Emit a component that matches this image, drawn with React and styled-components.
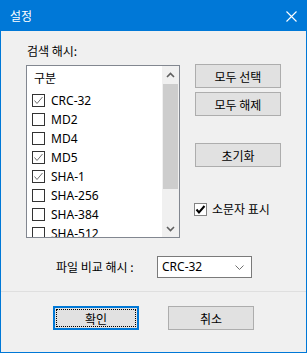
import React from "react";
import styled, { createGlobalStyle } from "styled-components";

const Global = createGlobalStyle`
  html, body { margin: 0; padding: 0; background: #ffffff; }
  * { box-sizing: border-box; }
  body { font-family: "Noto Sans", "Noto Sans CJK KR", sans-serif; font-size: 12px; color: #000; }
`;

const Window = styled.div`
  width: 307px;
  height: 353px;
  border: 1px solid #0078d7;
  background: #f0f0f0;
  display: flex;
  flex-direction: column;
`;

const TitleBar = styled.div`
  height: 30px;
  background: #0078d7;
  color: #fff;
  display: flex;
  align-items: center;
  justify-content: space-between;
  padding: 0 9px 0 9px;
  font-family: "Noto Sans CJK KR", sans-serif;
  font-size: 12px;
`;

const Title = styled.span`
  line-height: 16px;
  margin-top: -1px;
`;

const Body = styled.div`
  flex: 1;
  padding: 12px 0 0 25px;
  display: flex;
  flex-direction: column;
`;

const Label = styled.div`
  height: 16px;
  line-height: 16px;
  margin-left: 1px;
  margin-bottom: 5px;
  font-family: "Noto Sans CJK KR", sans-serif;
`;

const MainRow = styled.div`
  display: flex;
  align-items: flex-start;
`;

const ListBox = styled.div`
  margin-top: 1px;
  width: 154px;
  height: 173px;
  border: 1px solid #828790;
  background: #fff;
  display: flex;
`;

const Items = styled.div`
  flex: 1;
  overflow: hidden;
`;

const Header = styled.div`
  height: 25px;
  padding: 4px 0 0 7px;
  line-height: 16px;
  font-family: "Noto Sans CJK KR", sans-serif;
`;

const Row = styled.div`
  height: 19px;
  display: flex;
  align-items: center;
  padding-left: 5px;
  gap: 6px;
  white-space: nowrap;
  line-height: 16px;
`;

const Box = styled.span`
  width: 13px;
  height: 13px;
  border: 1px solid #333333;
  background: #fff;
  display: flex;
  align-items: center;
  justify-content: center;
  flex-shrink: 0;
`;

const Scrollbar = styled.div`
  width: 17px;
  background: #f0f0f0;
  display: flex;
  flex-direction: column;
`;

const ScrollBtn = styled.div`
  height: 17px;
  display: flex;
  align-items: center;
  justify-content: center;
`;

const Track = styled.div`
  flex: 1;
  padding-top: 1px;
`;

const Thumb = styled.div`
  height: 105px;
  margin: 0 1px;
  background: #cdcdcd;
`;

const Side = styled.div`
  margin-left: 15px;
  display: flex;
  flex-direction: column;
`;

const Button = styled.button`
  width: 86px;
  height: 24px;
  margin: 0;
  margin-top: ${p => p.$gap || 0}px;
  padding: 0;
  background: #e1e1e1;
  border: 1px solid #adadad;
  font-family: "Noto Sans CJK KR", sans-serif;
  font-size: 12px;
  color: #000;
  display: flex;
  align-items: center;
  justify-content: center;
`;

const DefaultButton = styled(Button)`
  border: 2px solid #0078d7;
  padding: 1px;
`;

const Focus = styled.span`
  width: 100%;
  height: 100%;
  border: 1px dotted #000;
  display: flex;
  align-items: center;
  justify-content: center;
`;

const CheckRow = styled.label`
  margin-top: 34px;
  height: 16px;
  line-height: 16px;
  display: flex;
  align-items: center;
  gap: 5px;
  margin-left: -1px;
  font-family: "Noto Sans CJK KR", sans-serif;
`;

const ClassicBox = styled.span`
  width: 13px;
  height: 13px;
  border: 1px solid #838383;
  background: #fff;
  display: flex;
  align-items: center;
  justify-content: center;
`;

const ComboRow = styled.div`
  margin-top: 18px;
  padding-left: 30px;
  display: flex;
  align-items: center;
`;

const ComboLabel = styled.span`
  width: 101px;
  flex-shrink: 0;
  white-space: nowrap;
  line-height: 16px;
  font-family: "Noto Sans CJK KR", sans-serif;
`;

const Combo = styled.div`
  width: 95px;
  height: 22px;
  border: 1px solid #7a7a7a;
  background: #fff;
  display: flex;
  align-items: center;
  justify-content: space-between;
  padding: 0 7px 0 4px;
  line-height: 16px;
`;

const Separator = styled.div`
  height: 1px;
  background: #dfdfdf;
  margin-top: 13px;
`;

const Footer = styled.div`
  height: 60px;
  padding: 14px 0 0 52px;
  display: flex;
  gap: 29px;
`;

const Check = ({ color = "#6d6d6d", w = 1 }) => (
  <svg width="11" height="11" viewBox="0 0 11 11">
    <polyline points="1.5,5.5 4,8.5 9.5,2" fill="none" stroke={color} strokeWidth={w} />
  </svg>
);

const Chevron = ({ up }) => (
  <svg width="9" height="6" viewBox="0 0 9 6">
    <polyline
      points={up ? "1,5 4.5,1.5 8,5" : "1,1 4.5,4.5 8,1"}
      fill="none"
      stroke="#606060"
      strokeWidth="1.6"
    />
  </svg>
);

const items = [
  ["CRC-32", true],
  ["MD2", false],
  ["MD4", false],
  ["MD5", true],
  ["SHA-1", true],
  ["SHA-256", false],
  ["SHA-384", false],
  ["SHA-512", false],
];

export default function App() {
  return (
    <>
      <Global />
      <Window>
        <TitleBar>
          <Title>설정</Title>
          <svg width="11" height="11" viewBox="0 0 11 11">
            <path d="M0.5,0.5 L10.5,10.5 M10.5,0.5 L0.5,10.5" stroke="#fff" strokeWidth="1.1" />
          </svg>
        </TitleBar>
        <Body>
          <Label>검색 해시:</Label>
          <MainRow>
            <ListBox>
              <Items>
                <Header>구분</Header>
                {items.map(([name, on]) => (
                  <Row key={name}>
                    <Box>{on && <Check />}</Box>
                    {name}
                  </Row>
                ))}
              </Items>
              <Scrollbar>
                <ScrollBtn><Chevron up /></ScrollBtn>
                <Track><Thumb /></Track>
                <ScrollBtn><Chevron /></ScrollBtn>
              </Scrollbar>
            </ListBox>
            <Side>
              <Button>모두 선택</Button>
              <Button $gap={4}>모두 해제</Button>
              <Button $gap={27}>초기화</Button>
              <CheckRow>
                <ClassicBox><Check color="#000" w={2} /></ClassicBox>
                소문자 표시
              </CheckRow>
            </Side>
          </MainRow>
          <ComboRow>
            <ComboLabel>파일 비교 해시 :</ComboLabel>
            <Combo>
              <span>CRC-32</span>
              <svg width="9" height="5" viewBox="0 0 9 5">
                <polyline points="0.5,0.5 4.5,4.5 8.5,0.5" fill="none" stroke="#707070" strokeWidth="1" />
              </svg>
            </Combo>
          </ComboRow>
        </Body>
        <Separator />
        <Footer>
          <DefaultButton><Focus>확인</Focus></DefaultButton>
          <Button>취소</Button>
        </Footer>
      </Window>
    </>
  );
}
